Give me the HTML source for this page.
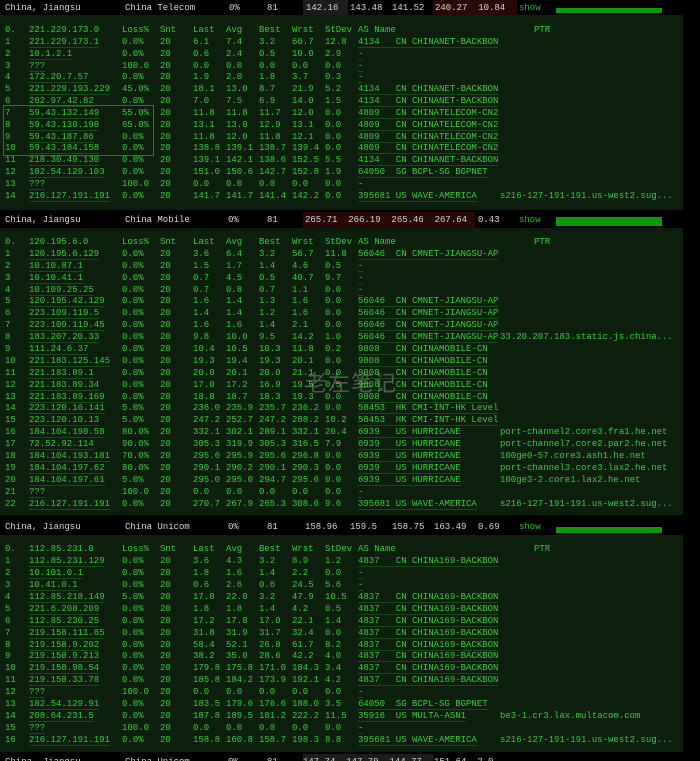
<!DOCTYPE html>
<html><head><meta charset="utf-8"><style>
html,body{margin:0;padding:0;background:#000;width:700px;height:761px;overflow:hidden;position:relative}
body{font-family:"Liberation Mono",monospace;font-size:9px}
.hd{position:absolute;left:0;width:700px;height:16px;background:#000;color:#d8d8d8;line-height:16px}
.hd span{position:absolute;white-space:pre}
.hd .sh{color:#1fbf1f}
.bar{position:absolute;background:#0c9a0c}
.pn{position:absolute;left:0;width:683px;background:#0c1f0c}
.rows{position:absolute;left:0;width:683px;color:#3ccc3c}
.r{position:relative;height:11.9px;line-height:11.9px}
.r span{position:absolute;white-space:pre;top:0}
.r span:nth-child(1){left:5px}
.r span:nth-child(2){left:29px;border-bottom:1px solid rgba(60,200,60,.25);line-height:10px}
.r span:nth-child(3){left:122px}
.r span:nth-child(4){left:160px}
.r span:nth-child(5){left:193px}
.r span:nth-child(6){left:226px}
.r span:nth-child(7){left:259px}
.r span:nth-child(8){left:292px}
.r span:nth-child(9){left:325px}
.r span:nth-child(10){left:358px;border-bottom:1px solid rgba(60,200,60,.25);line-height:10px}
.r span:nth-child(11){left:500px}
.h span:nth-child(2),.h span:nth-child(10){border:none;line-height:11.9px}
.h span:nth-child(11){left:534px}
.s1 .r{height:11.85px}
.s3 .r{height:11.94px}
</style></head><body>

<div class="hd" style="top:0">
<span style="left:5px">China, Jiangsu</span><span style="left:125px">China Telecom</span><span style="left:229px">0%</span><span style="left:267px">81</span>
<span style="left:303px;width:45px;background:#1c1c1c;padding-left:3px;box-sizing:border-box">142.16</span>
<span style="left:350px">143.48</span><span style="left:392px">141.52</span>
<span style="left:433px;width:84px;background:#2a0808;padding-left:2px;box-sizing:border-box">240.27  10.84</span>
<span class="sh" style="left:519px">show</span>
</div>
<div class="bar" style="left:556px;top:8px;width:106px;height:5px"></div>

<div class="pn" style="top:15px;height:195px"></div>
<div class="rows s1" style="top:25px">
<div class="r h"><span>0.</span><span>221.229.173.0</span><span>Loss%</span><span>Snt</span><span>Last</span><span>Avg</span><span>Best</span><span>Wrst</span><span>StDev</span><span>AS Name</span><span>PTR</span></div>
<div class="r"><span>1</span><span>221.229.173.1</span><span>0.0%</span><span>20</span><span>6.1</span><span>7.4</span><span>3.2</span><span>60.7</span><span>12.8</span><span>4134   CN CHINANET-BACKBON</span></div>
<div class="r"><span>2</span><span>10.1.2.1</span><span>0.0%</span><span>20</span><span>0.6</span><span>2.4</span><span>0.5</span><span>10.0</span><span>2.9</span><span>-</span></div>
<div class="r"><span>3</span><span>???</span><span>100.0</span><span>20</span><span>0.0</span><span>0.0</span><span>0.0</span><span>0.0</span><span>0.0</span><span>-</span></div>
<div class="r"><span>4</span><span>172.20.7.57</span><span>0.0%</span><span>20</span><span>1.9</span><span>2.0</span><span>1.8</span><span>3.7</span><span>0.3</span><span>-</span></div>
<div class="r"><span>5</span><span>221.229.193.229</span><span>45.0%</span><span>20</span><span>18.1</span><span>13.0</span><span>8.7</span><span>21.9</span><span>5.2</span><span>4134   CN CHINANET-BACKBON</span></div>
<div class="r"><span>6</span><span>202.97.42.82</span><span>0.0%</span><span>20</span><span>7.0</span><span>7.5</span><span>6.9</span><span>14.0</span><span>1.5</span><span>4134   CN CHINANET-BACKBON</span></div>
<div class="r"><span>7</span><span>59.43.132.149</span><span>55.0%</span><span>20</span><span>11.8</span><span>11.8</span><span>11.7</span><span>12.0</span><span>0.0</span><span>4809   CN CHINATELECOM-CN2</span></div>
<div class="r"><span>8</span><span>59.43.130.198</span><span>65.0%</span><span>20</span><span>13.1</span><span>13.0</span><span>12.9</span><span>13.1</span><span>0.0</span><span>4809   CN CHINATELECOM-CN2</span></div>
<div class="r"><span>9</span><span>59.43.187.86</span><span>0.0%</span><span>20</span><span>11.8</span><span>12.0</span><span>11.8</span><span>12.1</span><span>0.0</span><span>4809   CN CHINATELECOM-CN2</span></div>
<div class="r"><span>10</span><span>59.43.184.158</span><span>0.0%</span><span>20</span><span>138.8</span><span>139.1</span><span>138.7</span><span>139.4</span><span>0.0</span><span>4809   CN CHINATELECOM-CN2</span></div>
<div class="r"><span>11</span><span>218.30.49.130</span><span>0.0%</span><span>20</span><span>139.1</span><span>142.1</span><span>138.6</span><span>152.5</span><span>5.5</span><span>4134   CN CHINANET-BACKBON</span></div>
<div class="r"><span>12</span><span>182.54.129.103</span><span>0.0%</span><span>20</span><span>151.0</span><span>150.6</span><span>142.7</span><span>152.8</span><span>1.9</span><span>64050  SG BCPL-SG BGPNET</span></div>
<div class="r"><span>13</span><span>???</span><span>100.0</span><span>20</span><span>0.0</span><span>0.0</span><span>0.0</span><span>0.0</span><span>0.0</span><span>-</span></div>
<div class="r"><span>14</span><span>216.127.191.191</span><span>0.0%</span><span>20</span><span>141.7</span><span>141.7</span><span>141.4</span><span>142.2</span><span>0.0</span><span>395681 US WAVE-AMERICA</span><span>s216-127-191-191.us-west2.sug...</span></div>
</div>
<div style="position:absolute;left:3px;top:105px;width:149px;height:49px;border:1px solid #c0302a"></div>

<div class="hd" style="top:212px">
<span style="left:5px">China, Jiangsu</span><span style="left:125px">China Mobile</span><span style="left:228px">0%</span><span style="left:267px">81</span>
<span style="left:303px;width:172px;background:#2a0808;padding-left:2px;box-sizing:border-box">265.71  266.19  265.46  267.64</span>
<span style="left:478px">0.43</span>
<span class="sh" style="left:519px">show</span>
</div>
<div class="bar" style="left:556px;top:217px;width:106px;height:9px"></div>

<div class="pn" style="top:228px;height:287px"></div>
<div class="rows" style="top:237px">
<div class="r h"><span>0.</span><span>120.195.6.0</span><span>Loss%</span><span>Snt</span><span>Last</span><span>Avg</span><span>Best</span><span>Wrst</span><span>StDev</span><span>AS Name</span><span>PTR</span></div>
<div class="r"><span>1</span><span>120.195.6.129</span><span>0.0%</span><span>20</span><span>3.6</span><span>6.4</span><span>3.2</span><span>56.7</span><span>11.8</span><span>56046  CN CMNET-JIANGSU-AP</span></div>
<div class="r"><span>2</span><span>10.10.87.1</span><span>0.0%</span><span>20</span><span>1.5</span><span>1.7</span><span>1.4</span><span>4.6</span><span>0.5</span><span>-</span></div>
<div class="r"><span>3</span><span>10.10.41.1</span><span>0.0%</span><span>20</span><span>0.7</span><span>4.5</span><span>0.5</span><span>40.7</span><span>9.7</span><span>-</span></div>
<div class="r"><span>4</span><span>10.109.25.25</span><span>0.0%</span><span>20</span><span>0.7</span><span>0.8</span><span>0.7</span><span>1.1</span><span>0.0</span><span>-</span></div>
<div class="r"><span>5</span><span>120.195.42.129</span><span>0.0%</span><span>20</span><span>1.6</span><span>1.4</span><span>1.3</span><span>1.6</span><span>0.0</span><span>56046  CN CMNET-JIANGSU-AP</span></div>
<div class="r"><span>6</span><span>223.109.119.5</span><span>0.0%</span><span>20</span><span>1.4</span><span>1.4</span><span>1.2</span><span>1.6</span><span>0.0</span><span>56046  CN CMNET-JIANGSU-AP</span></div>
<div class="r"><span>7</span><span>223.109.119.45</span><span>0.0%</span><span>20</span><span>1.6</span><span>1.6</span><span>1.4</span><span>2.1</span><span>0.0</span><span>56046  CN CMNET-JIANGSU-AP</span></div>
<div class="r"><span>8</span><span>183.207.20.33</span><span>0.0%</span><span>20</span><span>9.8</span><span>10.0</span><span>9.5</span><span>14.2</span><span>1.0</span><span>56046  CN CMNET-JIANGSU-AP</span><span>33.20.207.183.static.js.china...</span></div>
<div class="r"><span>9</span><span>111.24.6.37</span><span>0.0%</span><span>20</span><span>10.4</span><span>10.5</span><span>10.3</span><span>11.8</span><span>0.2</span><span>9808   CN CHINAMOBILE-CN</span></div>
<div class="r"><span>10</span><span>221.183.125.145</span><span>0.0%</span><span>20</span><span>19.3</span><span>19.4</span><span>19.3</span><span>20.1</span><span>0.0</span><span>9808   CN CHINAMOBILE-CN</span></div>
<div class="r"><span>11</span><span>221.183.89.1</span><span>0.0%</span><span>20</span><span>20.0</span><span>20.1</span><span>20.0</span><span>21.1</span><span>0.0</span><span>9808   CN CHINAMOBILE-CN</span></div>
<div class="r"><span>12</span><span>221.183.89.34</span><span>0.0%</span><span>20</span><span>17.0</span><span>17.2</span><span>16.9</span><span>19.5</span><span>0.5</span><span>9808   CN CHINAMOBILE-CN</span></div>
<div class="r"><span>13</span><span>221.183.89.169</span><span>0.0%</span><span>20</span><span>18.8</span><span>18.7</span><span>18.3</span><span>19.3</span><span>0.0</span><span>9808   CN CHINAMOBILE-CN</span></div>
<div class="r"><span>14</span><span>223.120.16.141</span><span>5.0%</span><span>20</span><span>236.0</span><span>235.9</span><span>235.7</span><span>236.2</span><span>0.0</span><span>58453  HK CMI-INT-HK Level</span></div>
<div class="r"><span>15</span><span>223.120.10.13</span><span>5.0%</span><span>20</span><span>247.2</span><span>252.7</span><span>247.2</span><span>288.2</span><span>10.2</span><span>58453  HK CMI-INT-HK Level</span></div>
<div class="r"><span>16</span><span>184.104.198.58</span><span>80.0%</span><span>20</span><span>332.1</span><span>302.1</span><span>289.1</span><span>332.1</span><span>20.4</span><span>6939   US HURRICANE</span><span>port-channel2.core3.fra1.he.net</span></div>
<div class="r"><span>17</span><span>72.52.92.114</span><span>90.0%</span><span>20</span><span>305.3</span><span>319.9</span><span>305.3</span><span>316.5</span><span>7.9</span><span>6939   US HURRICANE</span><span>port-channel7.core2.par2.he.net</span></div>
<div class="r"><span>18</span><span>184.104.193.181</span><span>70.0%</span><span>20</span><span>295.6</span><span>295.9</span><span>295.6</span><span>296.8</span><span>0.0</span><span>6939   US HURRICANE</span><span>100ge0-57.core3.ash1.he.net</span></div>
<div class="r"><span>19</span><span>184.104.197.62</span><span>80.0%</span><span>20</span><span>290.1</span><span>290.2</span><span>290.1</span><span>290.3</span><span>0.0</span><span>6939   US HURRICANE</span><span>port-channel3.core3.lax2.he.net</span></div>
<div class="r"><span>20</span><span>184.104.197.61</span><span>5.0%</span><span>20</span><span>295.0</span><span>295.0</span><span>294.7</span><span>295.6</span><span>0.0</span><span>6939   US HURRICANE</span><span>100ge3-2.core1.lax2.he.net</span></div>
<div class="r"><span>21</span><span>???</span><span>100.0</span><span>20</span><span>0.0</span><span>0.0</span><span>0.0</span><span>0.0</span><span>0.0</span><span>-</span></div>
<div class="r"><span>22</span><span>216.127.191.191</span><span>0.0%</span><span>20</span><span>270.7</span><span>267.9</span><span>265.3</span><span>308.6</span><span>9.6</span><span>395681 US WAVE-AMERICA</span><span>s216-127-191-191.us-west2.sug...</span></div>
</div>
<div style="position:absolute;left:305px;top:366px;font-family:'Noto Sans CJK SC',sans-serif;font-size:22px;color:rgba(200,200,200,.35);letter-spacing:1px">老左笔记</div>

<div class="hd" style="top:519px">
<span style="left:5px">China, Jiangsu</span><span style="left:125px">China Unicom</span><span style="left:228px">0%</span><span style="left:267px">81</span>
<span style="left:305px">158.96</span><span style="left:350px">159.5</span><span style="left:392px">158.75</span><span style="left:434px">163.49</span>
<span style="left:475px;width:42px;background:#000;padding-left:3px;box-sizing:border-box">0.69</span>
<span class="sh" style="left:519px">show</span>
</div>
<div class="bar" style="left:556px;top:527px;width:106px;height:6px"></div>

<div class="pn" style="top:535px;height:217px"></div>
<div class="rows s3" style="top:544px">
<div class="r h"><span>0.</span><span>112.85.231.0</span><span>Loss%</span><span>Snt</span><span>Last</span><span>Avg</span><span>Best</span><span>Wrst</span><span>StDev</span><span>AS Name</span><span>PTR</span></div>
<div class="r"><span>1</span><span>112.85.231.129</span><span>0.0%</span><span>20</span><span>3.6</span><span>4.3</span><span>3.2</span><span>8.9</span><span>1.2</span><span>4837   CN CHINA169-BACKBON</span></div>
<div class="r"><span>2</span><span>10.101.0.1</span><span>0.0%</span><span>20</span><span>1.8</span><span>1.6</span><span>1.4</span><span>2.2</span><span>0.0</span><span>-</span></div>
<div class="r"><span>3</span><span>10.41.0.1</span><span>0.0%</span><span>20</span><span>0.6</span><span>2.6</span><span>0.6</span><span>24.5</span><span>5.6</span><span>-</span></div>
<div class="r"><span>4</span><span>112.85.218.149</span><span>5.0%</span><span>20</span><span>17.8</span><span>22.0</span><span>3.2</span><span>47.9</span><span>10.5</span><span>4837   CN CHINA169-BACKBON</span></div>
<div class="r"><span>5</span><span>221.6.208.209</span><span>0.0%</span><span>20</span><span>1.8</span><span>1.8</span><span>1.4</span><span>4.2</span><span>0.5</span><span>4837   CN CHINA169-BACKBON</span></div>
<div class="r"><span>6</span><span>112.85.230.25</span><span>0.0%</span><span>20</span><span>17.2</span><span>17.8</span><span>17.0</span><span>22.1</span><span>1.4</span><span>4837   CN CHINA169-BACKBON</span></div>
<div class="r"><span>7</span><span>219.158.111.85</span><span>0.0%</span><span>20</span><span>31.8</span><span>31.9</span><span>31.7</span><span>32.4</span><span>0.0</span><span>4837   CN CHINA169-BACKBON</span></div>
<div class="r"><span>8</span><span>219.158.9.202</span><span>0.0%</span><span>20</span><span>58.4</span><span>52.1</span><span>26.8</span><span>61.7</span><span>8.2</span><span>4837   CN CHINA169-BACKBON</span></div>
<div class="r"><span>9</span><span>219.158.9.213</span><span>0.0%</span><span>20</span><span>38.2</span><span>35.0</span><span>28.6</span><span>42.2</span><span>4.0</span><span>4837   CN CHINA169-BACKBON</span></div>
<div class="r"><span>10</span><span>219.158.98.54</span><span>0.0%</span><span>20</span><span>179.8</span><span>175.8</span><span>171.0</span><span>184.3</span><span>3.4</span><span>4837   CN CHINA169-BACKBON</span></div>
<div class="r"><span>11</span><span>219.158.33.78</span><span>0.0%</span><span>20</span><span>185.8</span><span>184.2</span><span>173.9</span><span>192.1</span><span>4.2</span><span>4837   CN CHINA169-BACKBON</span></div>
<div class="r"><span>12</span><span>???</span><span>100.0</span><span>20</span><span>0.0</span><span>0.0</span><span>0.0</span><span>0.0</span><span>0.0</span><span>-</span></div>
<div class="r"><span>13</span><span>182.54.129.91</span><span>0.0%</span><span>20</span><span>183.5</span><span>179.6</span><span>176.6</span><span>188.0</span><span>3.5</span><span>64050  SG BCPL-SG BGPNET</span></div>
<div class="r"><span>14</span><span>208.64.231.5</span><span>0.0%</span><span>20</span><span>187.8</span><span>189.5</span><span>181.2</span><span>222.2</span><span>11.5</span><span>35916  US MULTA-ASN1</span><span>be3-1.cr3.lax.multacom.com</span></div>
<div class="r"><span>15</span><span>???</span><span>100.0</span><span>20</span><span>0.0</span><span>0.0</span><span>0.0</span><span>0.0</span><span>0.0</span><span>-</span></div>
<div class="r"><span>16</span><span>216.127.191.191</span><span>0.0%</span><span>20</span><span>158.8</span><span>160.8</span><span>158.7</span><span>198.3</span><span>8.8</span><span>395681 US WAVE-AMERICA</span><span>s216-127-191-191.us-west2.sug...</span></div>
</div>

<div class="hd" style="top:754px">
<span style="left:5px">China, Jiangsu</span><span style="left:125px">China Unicom</span><span style="left:228px">0%</span><span style="left:267px">81</span>
<span style="left:303px;width:130px;background:#1c1c1c">147.74  147.79  144.77</span><span style="left:434px">151.64  2.0</span>
</div>
</body></html>
